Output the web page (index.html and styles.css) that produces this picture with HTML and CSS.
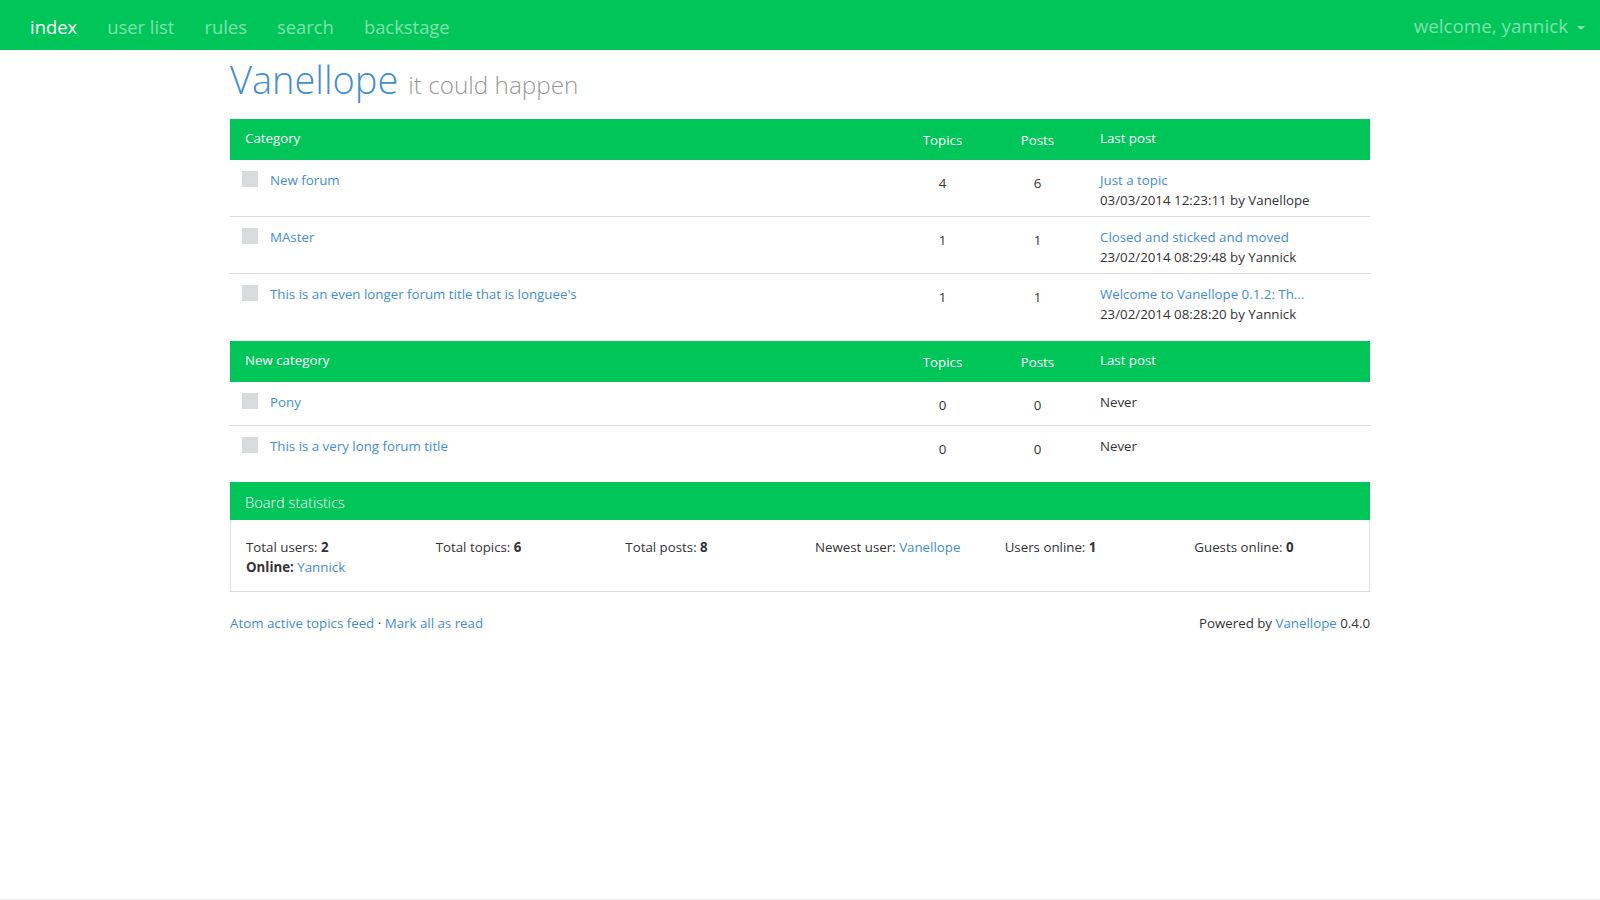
FILE: index.html
```html
<!DOCTYPE html>
<html lang="en">
<head>
<meta charset="utf-8">
<title>Vanellope</title>
<link rel="stylesheet" href="styles.css">
</head>
<body>
<nav class="navbar">
  <ul class="nav-links">
    <li><a class="active" href="#">index</a></li>
    <li><a href="#">user list</a></li>
    <li><a href="#">rules</a></li>
    <li><a href="#">search</a></li>
    <li><a href="#">backstage</a></li>
  </ul>
  <div class="nav-user">welcome, yannick<span class="caret"></span></div>
</nav>

<main class="container">
  <h1 class="page-title">Vanellope <small>it could happen</small></h1>

  <section class="forum-group first">
    <div class="forum-head">
      <div class="th th-cat">Category</div>
      <div class="th th-num">Topics</div>
      <div class="th th-num">Posts</div>
      <div class="th th-last">Last post</div>
    </div>
    <div class="forum-row">
      <div class="td td-title"><span class="forum-icon"></span><a href="#">New forum</a></div>
      <div class="td td-num">4</div>
      <div class="td td-num">6</div>
      <div class="td td-last"><a href="#">Just a topic</a><br>03/03/2014 12:23:11 by Vanellope</div>
    </div>
    <div class="forum-row">
      <div class="td td-title"><span class="forum-icon"></span><a href="#">MAster</a></div>
      <div class="td td-num">1</div>
      <div class="td td-num">1</div>
      <div class="td td-last"><a href="#">Closed and sticked and moved</a><br>23/02/2014 08:29:48 by Yannick</div>
    </div>
    <div class="forum-row">
      <div class="td td-title"><span class="forum-icon"></span><a href="#">This is an even longer forum title that is longuee's</a></div>
      <div class="td td-num">1</div>
      <div class="td td-num">1</div>
      <div class="td td-last"><a href="#">Welcome to Vanellope 0.1.2: Th...</a><br>23/02/2014 08:28:20 by Yannick</div>
    </div>
  </section>

  <section class="forum-group second">
    <div class="forum-head">
      <div class="th th-cat">New category</div>
      <div class="th th-num">Topics</div>
      <div class="th th-num">Posts</div>
      <div class="th th-last">Last post</div>
    </div>
    <div class="forum-row short">
      <div class="td td-title"><span class="forum-icon"></span><a href="#">Pony</a></div>
      <div class="td td-num">0</div>
      <div class="td td-num">0</div>
      <div class="td td-last">Never</div>
    </div>
    <div class="forum-row short">
      <div class="td td-title"><span class="forum-icon"></span><a href="#">This is a very long forum title</a></div>
      <div class="td td-num">0</div>
      <div class="td td-num">0</div>
      <div class="td td-last">Never</div>
    </div>
  </section>

  <section class="panel">
    <div class="panel-heading">Board statistics</div>
    <div class="panel-body">
      <div class="stats-grid">
        <div class="stat">Total users: <b>2</b></div>
        <div class="stat">Total topics: <b>6</b></div>
        <div class="stat">Total posts: <b>8</b></div>
        <div class="stat">Newest user: <a href="#">Vanellope</a></div>
        <div class="stat">Users online: <b>1</b></div>
        <div class="stat">Guests online: <b>0</b></div>
      </div>
      <div class="online"><b>Online:</b> <a href="#">Yannick</a></div>
    </div>
  </section>

  <div class="footer-links">
    <div><a href="#">Atom active topics feed</a> · <a href="#">Mark all as read</a></div>
    <div>Powered by <a href="#">Vanellope</a> 0.4.0</div>
  </div>
</main>

<footer class="page-bottom"></footer>
</body>
</html>
```

FILE: styles.css
```css
html, body {
  margin: 0;
  padding: 0;
}

body {
  font-family: "Open Sans", "Noto Sans", sans-serif;
  font-size: 13.3px;
  line-height: 20px;
  color: #333;
  background: #fff;
  min-height: 100vh;
  display: flex;
  flex-direction: column;
}

a {
  color: #448ecf;
  text-decoration: none;
}

/* Navbar */
.navbar {
  height: 50px;
  background: #00c659;
  display: flex;
  justify-content: space-between;
  align-items: center;
  padding: 0 0 0 15px;
  flex-shrink: 0;
}

.nav-links {
  display: flex;
  list-style: none;
  margin: 0;
  padding: 0;
}

.nav-links a {
  display: block;
  padding: 3px 15px 0;
  line-height: 47px;
  font-size: 18.4px;
  color: rgba(255, 255, 255, 0.5);
}

.nav-links a.active {
  color: #fff;
}

.nav-user {
  padding: 3px 15px 0;
  font-size: 18.8px;
  line-height: 47px;
  color: rgba(255, 255, 255, 0.5);
}

.caret {
  display: inline-block;
  width: 0;
  height: 0;
  margin-left: 9px;
  vertical-align: middle;
  border-top: 4px solid;
  border-left: 4px solid transparent;
  border-right: 4px solid transparent;
}

/* Main container */
.container {
  width: 1140px;
  margin: 0 auto;
  flex: 1 0 auto;
}

.page-title {
  margin: 7px 0 17px;
  font-size: 38px;
  line-height: 45px;
  font-weight: 300;
  color: #448ecf;
}

.page-title small {
  font-size: 24.3px;
  line-height: 1;
  color: #999;
  font-weight: 300;
}

/* Forum tables */
.forum-group.first {
  margin-bottom: 11px;
}

.forum-group.second {
  margin-bottom: 13px;
}

.forum-head,
.forum-row {
  display: grid;
  grid-template-columns: 665px 95px 95px 285px;
}

.forum-head {
  background: #00c659;
  color: #fff;
  height: 41px;
}

.th {
  padding: 9px 15px 0;
}

.th-num {
  padding-top: 11px;
  text-align: center;
}

.forum-row + .forum-row {
  border-top: 1px solid #ddd;
}

.forum-row {
  min-height: 56px;
}

.forum-row.short {
  min-height: 43px;
}

.td {
  padding: 10px 15px 6px;
}

.td-title {
  display: flex;
  align-items: flex-start;
  padding-left: 12px;
}

.forum-icon {
  flex: 0 0 16px;
  width: 16px;
  height: 16px;
  margin-top: 1px;
  margin-right: 12px;
  background: #d9dcdc;
}

.td-num {
  padding-top: 13px;
  text-align: center;
}

/* Panel */
.panel {
  border: 1px solid #ddd;
  margin-bottom: 21px;
}

.panel-heading {
  background: #00c659;
  color: #fff;
  font-size: 14.6px;
  font-weight: 300;
  line-height: 18px;
  padding: 10px 14px 9px;
  margin: -1px -1px 0;
  border: 1px solid #00c659;
  border-bottom: 0;
}

.panel-body {
  padding: 17px 0 14px;
}

.stats-grid {
  display: grid;
  grid-template-columns: repeat(6, 1fr);
}

.stat {
  padding: 0 15px;
}

.online {
  padding: 0 15px;
}

/* Footer links */
.footer-links {
  display: flex;
  justify-content: space-between;
}

.page-bottom {
  flex-shrink: 0;
  height: 0;
  border-top: 1px solid #eee;
}
```
